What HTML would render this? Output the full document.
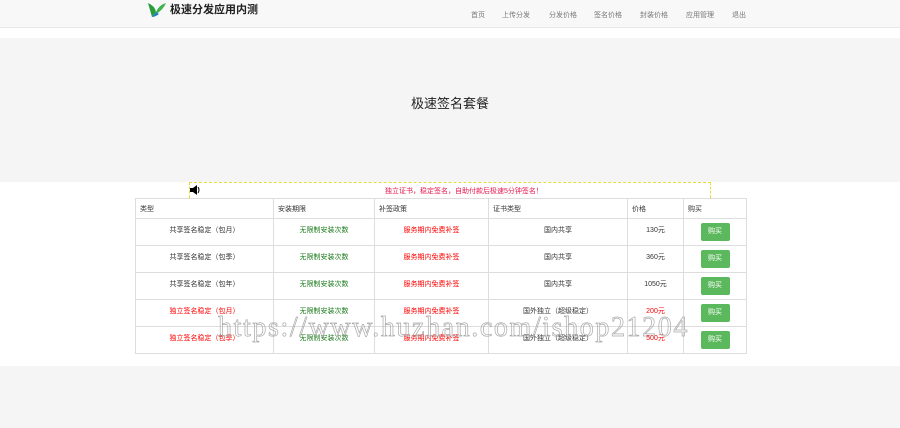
<!DOCTYPE html>
<html><head><meta charset="utf-8"><style>
*{margin:0;padding:0;box-sizing:border-box}
body{width:900px;height:428px;background:#fff;font-family:"Liberation Sans","Noto Sans CJK SC",sans-serif;font-size:7px;color:#333;position:relative;overflow:hidden}
.nav{position:absolute;left:0;top:0;width:900px;height:28px;background:#f8f8f8;border-bottom:1px solid #e7e7e7}
.logo{position:absolute;left:148px;top:3px;font-weight:bold;font-size:11px;color:#222}
.logo span{margin-left:22px;line-height:14px}
.menu{position:absolute;top:10px;font-size:7px;color:#777}
.hero{position:absolute;left:0;top:38px;width:900px;height:144px;background:#f5f5f5}
.hero h1{position:absolute;top:55px;width:100%;text-align:center;font-size:13px;font-weight:normal;color:#222}
.notice{position:absolute;left:189px;top:182px;width:522px;height:16px;border:1px dashed #e6dc3c;border-bottom:none;background:#fff}
.notice p{position:absolute;left:195px;top:3px;color:#e8174f;font-size:7px}
table{position:absolute;left:135px;top:198px;width:612px;border-collapse:collapse;font-size:7px}
td,th{border-left:1px solid #ddd;border-right:1px solid #ddd;text-align:center;vertical-align:top;padding-top:6px;height:27px}
tr{border-bottom:1px solid #ddd}
th{text-align:left;padding:5px 4px 0;height:20px;font-weight:normal;color:#333;border-top:1px solid #ddd}
.g{color:#1a7a1a}.r{color:#f00}
.btn{display:inline-block;width:29px;height:18px;background:#5cb85c;color:#fff;border-radius:2px;line-height:18px;margin-top:-2px}
.foot{position:absolute;left:0;top:366px;width:900px;height:62px;background:#f5f5f5}
.wm{position:absolute;left:218px;top:312px;font-family:"Liberation Serif",serif;font-size:28px;color:transparent;-webkit-text-stroke:0.7px #aaa;letter-spacing:1.6px;white-space:nowrap}
</style></head><body>
<div class="nav">
<svg style="position:absolute;left:147px;top:2px" width="20" height="16" viewBox="0 0 20 16"><path d="M1 1 Q8 4 9 10 L5 15 Q3 8 1 1Z" fill="#2a9d3a"/><path d="M9 10 Q12 3 19 1 Q16 8 9 12Z" fill="#3db54a"/><path d="M5 15 L9 10 L12 12 Q8 15 5 15Z" fill="#1f7fc4"/></svg>
<div class="logo"><span>极速分发应用内测</span></div>
<div class="menu" style="left:471px">首页</div>
<div class="menu" style="left:502px">上传分发</div>
<div class="menu" style="left:549px">分发价格</div>
<div class="menu" style="left:594px">签名价格</div>
<div class="menu" style="left:640px">封装价格</div>
<div class="menu" style="left:686px">应用管理</div>
<div class="menu" style="left:732px">退出</div>
</div>
<div class="hero"><h1>极速签名套餐</h1></div>
<div class="notice"><svg style="position:absolute;left:0;top:2px" width="11" height="10" viewBox="0 0 11 10"><path d="M0 3h3l4-3v10l-4-3H0z" fill="#000"/><path d="M8 2q2 3 0 6" stroke="#000" fill="none"/></svg><p>独立证书，稳定签名，自助付款后极速5分钟签名！</p></div>
<table>
<tr><th style="width:138px">类型</th><th style="width:101px">安装期限</th><th style="width:114px">补签政策</th><th style="width:139px">证书类型</th><th style="width:56px">价格</th><th>购买</th></tr>
<tr><td>共享签名稳定（包月）</td><td class="g">无限制安装次数</td><td class="r">服务期内免费补签</td><td>国内共享</td><td>130元</td><td><span class="btn">购买</span></td></tr>
<tr><td>共享签名稳定（包季）</td><td class="g">无限制安装次数</td><td class="r">服务期内免费补签</td><td>国内共享</td><td>360元</td><td><span class="btn">购买</span></td></tr>
<tr><td>共享签名稳定（包年）</td><td class="g">无限制安装次数</td><td class="r">服务期内免费补签</td><td>国内共享</td><td>1050元</td><td><span class="btn">购买</span></td></tr>
<tr><td class="r">独立签名稳定（包月）</td><td class="g">无限制安装次数</td><td class="r">服务期内免费补签</td><td>国外独立（超级稳定）</td><td class="r">200元</td><td><span class="btn">购买</span></td></tr>
<tr><td class="r">独立签名稳定（包季）</td><td class="g">无限制安装次数</td><td class="r">服务期内免费补签</td><td>国外独立（超级稳定）</td><td class="r">500元</td><td><span class="btn">购买</span></td></tr>
</table>
<div class="foot"></div>
<div class="wm">https://www.huzhan.com/ishop21204</div>
</body></html>
